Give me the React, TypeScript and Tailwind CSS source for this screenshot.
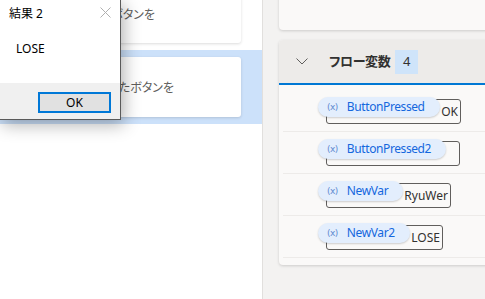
import React from "react";

const jp = "font-['Noto_Sans','Noto_Sans_CJK_JP',sans-serif] [font-feature-settings:'palt']";

type Row = { name: string; value: string; boxW: string };

const rows: Row[] = [
  { name: "ButtonPressed", value: "OK", boxW: "w-[135px]" },
  { name: "ButtonPressed2", value: "", boxW: "w-[134px]" },
  { name: "NewVar", value: "RyuWer", boxW: "w-[125px]" },
  { name: "NewVar2", value: "LOSE", boxW: "w-[117px]" },
];

function Chip({ name }: { name: string }) {
  return (
    <div className="absolute left-[35px] top-[7px] h-[20px] flex items-center rounded-full bg-[#e3eefd] pl-[9px] pr-[15px] shadow-[0_1px_2px_rgba(0,0,0,0.18)]">
      <span className="text-[9px] leading-none text-[#5f8ad0] font-['DejaVu_Sans',sans-serif] tracking-[-0.5px]">(x)</span>
      <span className="ml-[9px] text-[12px] leading-none text-[#1467de] font-['Noto_Sans',sans-serif] tracking-[-0.4px]">{name}</span>
    </div>
  );
}

export default function App() {
  return (
    <div className={`w-[485px] h-[299px] overflow-hidden relative flex bg-white ${jp}`}>
      {/* Left panel */}
      <div className="w-[263px] shrink-0 h-full bg-white border-r border-[#e1dfdd] flex flex-col">
        <div className="mt-[-17px] ml-[8px] mr-[21px] h-[60px] shrink-0 bg-white rounded-[3px] shadow-[0_1px_3px_rgba(0,0,0,0.14)] flex items-center pt-[4px]">
          <div className="w-[147px] shrink-0 flex justify-end overflow-hidden whitespace-nowrap text-[12px] text-[#605e5c]">
            メッセージを表示し、押されたボタンを
          </div>
        </div>
        <div className="mt-[7px] bg-[#cce1fa] py-[7px]">
          <div className="ml-[8px] mr-[21px] h-[60px] bg-white rounded-[3px] shadow-[0_1px_3px_rgba(0,0,0,0.14)] flex items-center pt-[2px]">
            <div className="w-[166px] shrink-0 flex justify-end overflow-hidden whitespace-nowrap text-[12px] text-[#605e5c]">
              結果を保存し、押されたボタンを
            </div>
          </div>
        </div>
      </div>

      {/* Right panel */}
      <div className="flex-1 h-full bg-[#f3f2f1] pl-[16px] flex flex-col">
        <div className="mt-[-20px] h-[50px] shrink-0 mr-[-10px] bg-[#faf9f8] rounded-[4px] shadow-[0_1px_3px_rgba(0,0,0,0.16)]" />
        <div className="mt-[10px] mr-[-10px] bg-[#faf9f8] rounded-[4px] shadow-[0_1px_3px_rgba(0,0,0,0.16)] pb-[7px] overflow-hidden">
          <div className="h-[45px] bg-[#edebe9] border-b-2 border-[#0078d4] flex items-center">
            <svg className="ml-[17px]" width="12" height="7" viewBox="0 0 12 7" fill="none">
              <path d="M0.5 0.5 L6 6 L11.5 0.5" stroke="#605e5c" strokeWidth="1" />
            </svg>
            <span className="ml-[21px] text-[13px] font-bold text-[#323130] tracking-[-0.4px]">フロー変数</span>
            <span className="ml-[5px] w-[23px] h-[24px] flex items-center justify-center bg-[#cfe4fa] text-[13px] text-[#323130] font-['Noto_Sans',sans-serif]">4</span>
          </div>
          <div className="pt-[5px]">
            {rows.map((r) => (
              <div key={r.name} className="relative mx-[4px] h-[42px] pt-[9px] border-b border-[#edebe9]">
                <div className={`ml-[43px] h-[25px] ${r.boxW} border border-[#605e5c] rounded-[3px] flex items-center justify-end pr-[2px] pt-[1px] text-[12px] text-[#323130] font-['Noto_Sans',sans-serif]`}>
                  {r.value}
                </div>
                <Chip name={r.name} />
              </div>
            ))}
          </div>
        </div>
      </div>

      {/* Message box dialog */}
      <div className="absolute left-[-1px] top-[-1px] w-[122px] h-[121px] border border-[#5a5a5a] bg-white flex flex-col shadow-[3px_5px_16px_rgba(0,0,0,0.3)]">
        <div className="h-[26px] flex items-center pl-[9px] pt-[1px] relative">
          <span className="text-[12px] text-black">結果 2</span>
          <svg className="absolute left-[100px] top-[7px]" width="11" height="11" viewBox="0 0 11 11">
            <path d="M0.5 0.5 L10.5 10.5 M10.5 0.5 L0.5 10.5" stroke="#b0b0b0" strokeWidth="1" />
          </svg>
        </div>
        <div className="flex-1 pl-[16px] pt-[9px]">
          <span className="text-[12px] leading-[16px] text-black font-['Noto_Sans',sans-serif]">LOSE</span>
        </div>
        <div className="h-[36px] bg-[#f0f0f0] flex justify-end items-start pt-[9px] pr-[9px]">
          <div className="w-[73px] h-[21px] border-2 border-[#0078d7] bg-[#e1e1e1] flex items-center justify-center text-[12px] text-black font-['Noto_Sans',sans-serif]">
            OK
          </div>
        </div>
      </div>
    </div>
  );
}
